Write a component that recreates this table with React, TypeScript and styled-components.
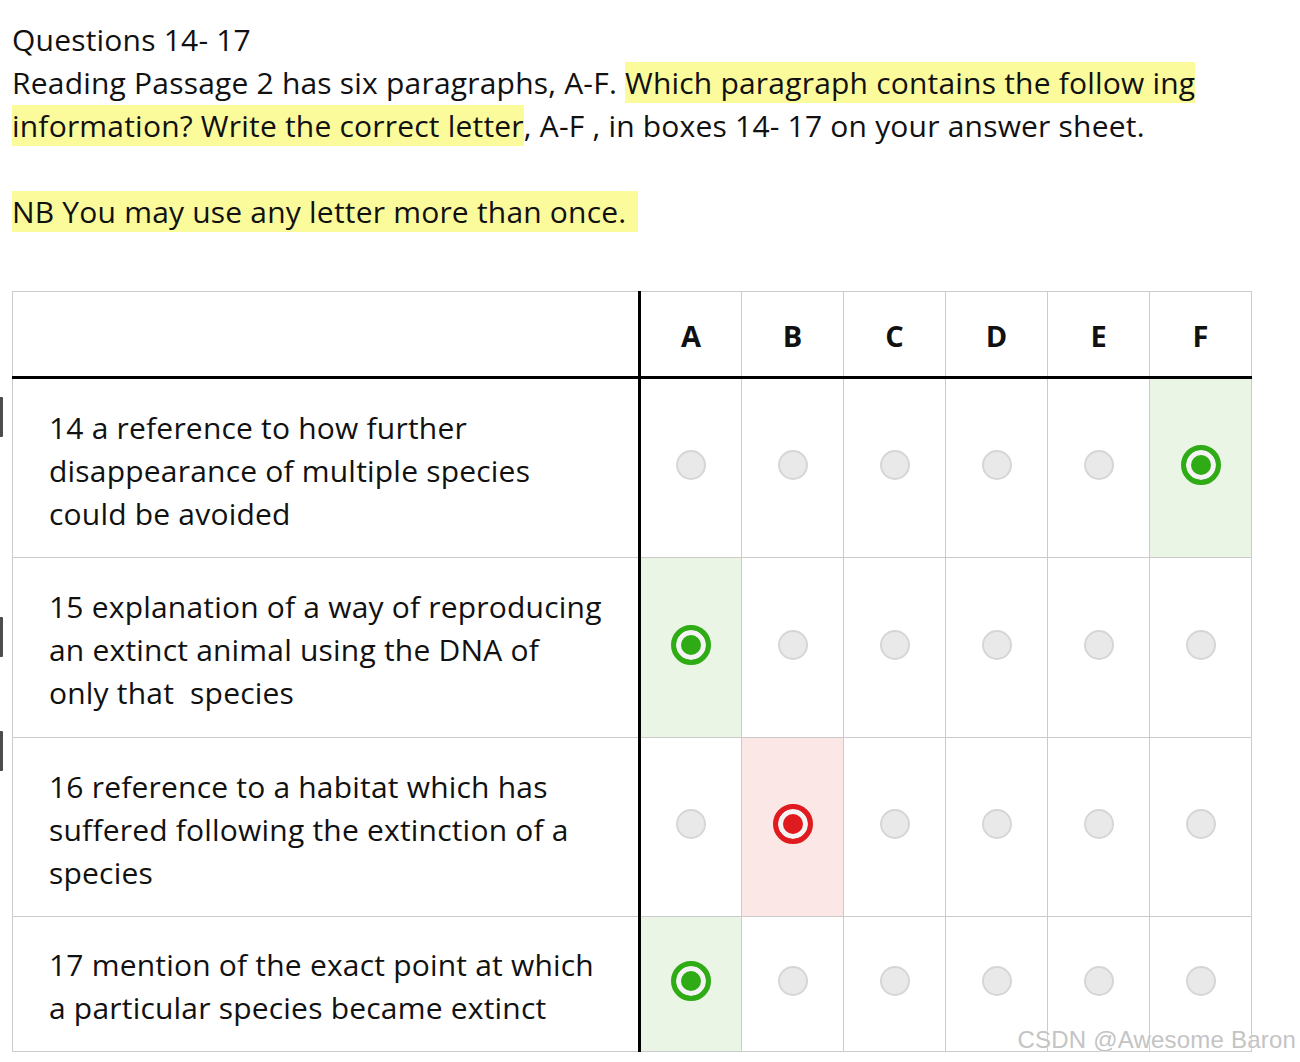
import React from "react";
import styled, { createGlobalStyle } from "styled-components";

const GlobalStyle = createGlobalStyle`
  html, body {
    margin: 0;
    padding: 0;
    background: #ffffff;
  }
  body {
    font-family: "Open Sans", "Noto Sans", sans-serif;
    color: #111111;
  }
`;

const LETTERS = ["A", "B", "C", "D", "E", "F"];

type Mark = "none" | "correct" | "wrong";

type Question = {
  lines: string[];
  height: number;
  answers: Record<string, Mark>;
};

const QUESTIONS: Question[] = [
  {
    lines: [
      "14 a reference to how further",
      "disappearance of multiple species",
      "could be avoided",
    ],
    height: 180,
    answers: { F: "correct" },
  },
  {
    lines: [
      "15 explanation of a way of reproducing",
      "an extinct animal using the DNA of",
      "only that\u00a0 species",
    ],
    height: 180,
    answers: { A: "correct" },
  },
  {
    lines: [
      "16 reference to a habitat which has",
      "suffered following the extinction of a",
      "species",
    ],
    height: 179,
    answers: { B: "wrong" },
  },
  {
    lines: [
      "17 mention of the exact point at which",
      "a particular species became extinct",
    ],
    height: 135,
    answers: { A: "correct" },
  },
];

// side marks from the original capture, left edge
const SIDE_MARKS = [397, 617, 731];

const Page = styled.div`
  position: relative;
  height: 1062px;
  overflow: hidden;
  padding: 18px 0 0 12px;
  box-sizing: border-box;
`;

const Intro = styled.div`
  font-size: 30px;
  line-height: 43px;
  letter-spacing: 0.2px;
  margin-bottom: 58px;
`;

const Line = styled.div`
  white-space: pre;
`;

const Hl = styled.span<{ $padRight?: number }>`
  background: #fbfb9c;
  padding: 0 ${(p) => p.$padRight ?? 0}px 0 0;
`;

const Table = styled.table`
  border-collapse: collapse;
  table-layout: fixed;
  width: 1240px;
`;

const Col = styled.col<{ $w: number }>`
  width: ${(p) => p.$w}px;
`;

const HeadCell = styled.th<{ $first?: boolean }>`
  height: 82px;
  padding: 2px 0 0;
  border: 1px solid #cbcbcb;
  border-bottom: 3px solid #000;
  border-right: ${(p) => (p.$first ? "3px solid #000" : "1px solid #cbcbcb")};
  font-size: 29px;
  font-weight: 700;
  text-align: center;
  vertical-align: middle;
`;

const TextCell = styled.td`
  padding: 4px 20px 0 36px;
  border: 1px solid #cbcbcb;
  border-right: 3px solid #000;
  font-size: 30px;
  line-height: 43px;
  letter-spacing: 0.2px;
  vertical-align: middle;
  white-space: nowrap;
`;

const OptCell = styled.td<{ $mark: Mark }>`
  padding: 0 0 6px;
  border: 1px solid #cbcbcb;
  text-align: center;
  vertical-align: middle;
  background: ${(p) =>
    p.$mark === "correct" ? "#eaf5e6" : p.$mark === "wrong" ? "#fbe7e6" : "#fff"};
`;

const Radio = styled.span<{ $mark: Mark }>`
  display: inline-block;
  vertical-align: middle;
  box-sizing: border-box;
  border-radius: 50%;
  ${(p) =>
    p.$mark === "none"
      ? `
    width: 30px;
    height: 30px;
    background: #e9e9e9;
    border: 2px solid #d6d6d6;
  `
      : `
    width: 40px;
    height: 40px;
    background: ${p.$mark === "correct" ? "#2fab16" : "#e01b1f"};
    border: 5px solid ${p.$mark === "correct" ? "#2fab16" : "#e01b1f"};
    box-shadow: inset 0 0 0 5px #f4f4f4;
  `}
`;

const SideMark = styled.div`
  position: absolute;
  left: 0;
  width: 3px;
  height: 40px;
  background: #4d4d4d;
  border-radius: 0 1px 1px 0;
`;

const Watermark = styled.div`
  position: absolute;
  right: 4px;
  bottom: 8px;
  font-family: "Liberation Sans", Arial, sans-serif;
  font-size: 24px;
  color: #c4c4c4;
  text-shadow: 0 0 1px #fff, 0 0 2px #fff;
  letter-spacing: 0.2px;
`;

export default function App() {
  return (
    <>
      <GlobalStyle />
      <Page>
        <Intro>
          <Line>Questions 14- 17</Line>
          <Line>
            Reading Passage 2 has six paragraphs, A-F.{" "}
            <Hl>Which paragraph contains the follow ing</Hl>
          </Line>
          <Line>
            <Hl>information? Write the correct letter</Hl>, A-F , in boxes 14- 17 on your answer sheet.
          </Line>
          <Line> </Line>
          <Line>
            <Hl $padRight={12}>NB You may use any letter more than once.</Hl>
          </Line>
        </Intro>

        <Table>
          <colgroup>
            <Col $w={627} />
            {LETTERS.map((l) => (
              <Col key={l} $w={102} />
            ))}
          </colgroup>
          <thead>
            <tr>
              <HeadCell $first />
              {LETTERS.map((l) => (
                <HeadCell key={l}>{l}</HeadCell>
              ))}
            </tr>
          </thead>
          <tbody>
            {QUESTIONS.map((q, i) => (
              <tr key={i} style={{ height: q.height }}>
                <TextCell>
                  {q.lines.map((ln, j) => (
                    <div key={j}>{ln}</div>
                  ))}
                </TextCell>
                {LETTERS.map((l) => {
                  const mark = q.answers[l] ?? "none";
                  return (
                    <OptCell key={l} $mark={mark}>
                      <Radio $mark={mark} />
                    </OptCell>
                  );
                })}
              </tr>
            ))}
          </tbody>
        </Table>

        {SIDE_MARKS.map((top) => (
          <SideMark key={top} style={{ top }} />
        ))}
        <Watermark>CSDN @Awesome Baron</Watermark>
      </Page>
    </>
  );
}
